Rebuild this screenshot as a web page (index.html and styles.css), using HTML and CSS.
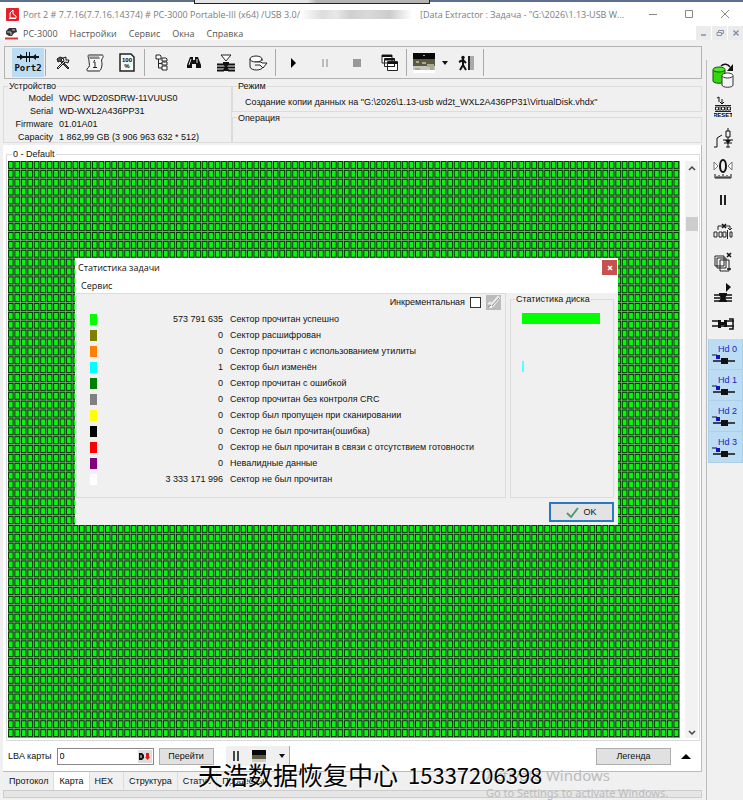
FILE: index.html
```html
<!DOCTYPE html>
<html lang="ru">
<head>
<meta charset="utf-8">
<title>PC-3000 Portable-III</title>
<link rel="stylesheet" href="styles.css">
</head>
<body>
<div class="topedge"><span class="edge-tab"></span></div>
<header class="titlebar">
  <svg class="logo" width="13" height="13" viewBox="0 0 13 13"><rect width="13" height="13" rx="1" fill="#e3202c"/><path d="M4 10V5l3-3v4l3 2v2z" fill="none" stroke="#fff"/><path d="M3 10.500h7" stroke="#fff"/></svg>
  <h1 class="title">Port 2 # 7.7.16(7.7.16.14374) # PC-3000 Portable-III (x64) /USB 3.0/</h1>
  <span class="redacted"></span>
  <span class="title title-rest">[Data Extractor : Задача - "G:\2026\1.13-USB W...</span>
  <div class="winbtns">
    <button aria-label="Свернуть"><svg width="10" height="10" viewBox="0 0 10 10"><path d="M1 5.500h8" stroke="#888"/></svg></button>
    <button aria-label="Развернуть"><svg width="10" height="10" viewBox="0 0 10 10"><path d="M1.500 1.500h7v7h-7z" fill="none" stroke="#888"/></svg></button>
    <button aria-label="Закрыть"><svg width="10" height="10" viewBox="0 0 10 10"><path d="M1 1l8 8M9 1l-8 8" stroke="#888"/></svg></button>
  </div>
</header>
<nav class="menubar">
  <svg width="13" height="13" viewBox="0 0 13 13"><path d="M1 4l3-3h7l1 4-3 1-2 3H4L1 7z" fill="#333"/><path d="M2 5h4v3M7 3h3" stroke="#ccc" fill="none"/><path d="M0 11.500h13" stroke="#d33" stroke-width="2"/></svg>
  <button>PC-3000</button><button>Настройки</button><button>Сервис</button><button>Окна</button><button>Справка</button>
  <div class="mdibtns">
    <button aria-label="Свернуть окно"><svg width="8" height="8" viewBox="0 0 8 8"><path d="M1 6h5" stroke="#8293a8" stroke-width="1.500"/></svg></button>
    <button aria-label="Восстановить окно"><svg width="8" height="8" viewBox="0 0 8 8"><path d="M2.500 3V1.500h5v3H6M1 3.500h4.500v3H1z" fill="none" stroke="#8293a8"/></svg></button>
    <button aria-label="Закрыть окно"><svg width="8" height="8" viewBox="0 0 8 8"><path d="M1.500 1.500l5 5M6.500 1.500l-5 5" stroke="#8293a8" stroke-width="1.500"/></svg></button>
  </div>
</nav>
<div class="frame">
<div class="left">
  <div class="toolbar">
    <button class="tb port"><svg width="26" height="12" viewBox="0 0 26 12"><path d="M2 6h22" stroke="#111" stroke-width="2"/><path d="M5 3l4 3-4 3zM21 3l-4 3 4 3z" fill="#111"/><path d="M11.500 1v10M14.500 1v10" stroke="#111"/></svg><span>Port2</span></button>
    <i class="sep"></i>
    <button class="tb" aria-label="Инструменты"><svg width="14" height="14" viewBox="0 0 14 14"><path d="M1 3l3-2 3 1-2 2 8 8-1 1-8-8-2 1z" fill="#555" stroke="#222"/><path d="M1 12l7-7-1-3 3-1v3l3 0-1 3-3-1-7 7z" fill="#ddd" stroke="#222"/></svg></button>
    <button class="tb" aria-label="Протокол"><svg width="18" height="20" viewBox="0 0 18 20"><path d="M3 2h13c2 0 1 3 0 4s0 3 0 5-1 7-3 7H2c-2 0-1-3 1-4 1-2 0-4 0-6S1 2 3 2z" fill="#f6f6f6" stroke="#222"/><path d="M4 5h10M4 3v3M6 3v3M8 3v3M10 3v3M12 3v3" stroke="#444" stroke-width=".7"/><path d="M7 9h2v5M7 14.500h4M8 7.500h1" stroke="#222" fill="none"/></svg></button>
    <button class="tb" aria-label="Сто процентов"><svg width="16" height="19" viewBox="0 0 16 19"><path d="M1 1h11l3 3v14H1z" fill="#f8f8f8" stroke="#222" stroke-width="1.500"/><text x="8" y="9" class="tiny" text-anchor="middle">100</text><text x="8" y="15" class="tiny" text-anchor="middle">%</text></svg></button>
    <i class="sep"></i>
    <button class="tb" aria-label="Дерево"><svg width="14" height="17" viewBox="0 0 14 17"><path d="M1 1h4l1 1v3H1zM7 4h4l1 1v2H7zM7 8h5v3H7zM7 12h5v4H7z" fill="#fff" stroke="#222"/><path d="M3.500 5v9H7M3.500 9.500H7" fill="none" stroke="#222"/></svg></button>
    <button class="tb" aria-label="Поиск"><svg width="14" height="14" viewBox="0 0 14 14"><path d="M3 1h3v3h2V1h3l3 8v3H9V8H5v4H0V9z" fill="#111"/><path d="M4 3L2 9M10 3v4" stroke="#ddd"/></svg></button>
    <button class="tb" aria-label="Фильтр"><svg width="20" height="18" viewBox="0 0 20 18"><path d="M5 1h10l-5 6z" fill="#fff" stroke="#222"/><path d="M1 10.500h7M1 13.500h18M1 16.500h7M12 10.500h7M12 16.500h7" stroke="#111" stroke-width="2"/><path d="M7 8h6v2l-2 3 2 3v1H7v-1l2-3-2-3z" fill="#111"/></svg></button>
    <button class="tb" aria-label="Чтение диска"><svg width="19" height="16" viewBox="0 0 19 16"><ellipse cx="7" cy="4" rx="6" ry="3" fill="#fff" stroke="#222"/><path d="M1 4v8c1 4 12 4 13 0" fill="none" stroke="#222"/><path d="M13 4v2M6 7h6l1 1h5l-4 5-3-3H6" fill="#fff" stroke="#222"/></svg></button>
    <i class="sep"></i>
    <button class="tb" aria-label="Старт"><svg width="8" height="10" viewBox="0 0 8 10"><path d="M2 0l5 5-5 5z" fill="#000"/></svg></button>
    <button class="tb" aria-label="Пауза"><svg width="8" height="10" viewBox="0 0 8 10"><path d="M2 1v8M6 1v8" stroke="#aaa" stroke-width="1.500"/></svg></button>
    <button class="tb" aria-label="Стоп"><svg width="8" height="8" viewBox="0 0 8 8"><path d="M0 0h8v8H0z" fill="#999"/></svg></button>
    <button class="tb" aria-label="Окна"><svg width="17" height="17" viewBox="0 0 17 17"><g fill="#fff" stroke="#222"><path d="M1 1h10v8H1zM3.500 4.500h10v8h-10zM6.500 7.500h10v9h-10z"/></g><path d="M1 2h10M4 5.500h10M7 9h10" stroke="#111" stroke-width="2"/><path d="M9 12.500h5" stroke="#222"/></svg></button>
    <i class="sep"></i>
    <button class="tb" aria-label="Карта"><svg width="22" height="20" viewBox="0 0 22 20"><path d="M0 0h22v6H0z" fill="#080808"/><path d="M0 6h22v7H0z" fill="#5b5a3e"/><path d="M0 13h22v4H0z" fill="#c4c4c4"/><path d="M0 17h22v3H0z" fill="#fff"/><path d="M3 8h3v2H3zM9 9h4v2H9zM10 2h2v1h-2zM14 11h7v6h-4v-3h-3zM2 15h5v2H2z" fill="#a9a98f"/></svg></button>
    <button class="caret" aria-label="Выбор карты"><svg width="6" height="4" viewBox="0 0 6 4"><path d="M0 0h6L3 4z" fill="#111"/></svg></button>
    <button class="tb" aria-label="Выход"><svg width="16" height="16" viewBox="0 0 16 16"><circle cx="5" cy="2.500" r="1.700" fill="#111"/><path d="M5 4v6l3 5M5 10l-3 5M1 7l4-2 3 3" stroke="#111" stroke-width="2" fill="none"/><path d="M10 1h2v14h-2z" fill="#222"/><path d="M12 1h4v14h-4z" fill="#aaa"/></svg></button>
    <i class="sep"></i>
  </div>
  <section class="info">
    <fieldset class="device">
      <legend>Устройство</legend>
      <dl><dt>Model</dt><dd>WDC WD20SDRW-11VUUS0</dd><dt>Serial</dt><dd>WD-WXL2A436PP31</dd><dt>Firmware</dt><dd>01.01A01</dd><dt>Capacity</dt><dd>1 862,99 GB (3 906 963 632 * 512)</dd></dl>
    </fieldset>
    <div class="modes">
      <fieldset><legend>Режим</legend><p>Создание копии данных на "G:\2026\1.13-usb wd2t_WXL2A436PP31\VirtualDisk.vhdx"</p></fieldset>
      <fieldset><legend>Операция</legend></fieldset>
    </div>
  </section>
  <main class="work">
    <fieldset class="mapbox">
      <legend>0 - Default</legend>
      <div class="maprow">
        <svg class="map" viewBox="0 0 728 585" preserveAspectRatio="none" role="img" aria-label="Карта секторов">
          <defs><pattern id="cell" width="7" height="9" patternUnits="userSpaceOnUse"><path d="M0 0h7v9H0z" fill="#869686"/><path d="M0 0h6v8H0z" fill="#003800"/><path d="M1 1h4v6H1z" fill="#00fa0a"/></pattern></defs>
          <rect width="728" height="585" fill="url(#cell)"/>
        </svg>
        <div class="scroll">
          <svg width="8" height="6" viewBox="0 0 8 6"><path d="M1 5l3-3 3 3" fill="none" stroke="#444" stroke-width="1.500"/></svg>
          <i class="thumb"></i>
          <svg width="8" height="6" viewBox="0 0 8 6"><path d="M1 1l3 3 3-3" fill="none" stroke="#444" stroke-width="1.500"/></svg>
        </div>
      </div>
    </fieldset>
    <div class="controls">
      <label for="lba">LBA карты</label>
      <div class="lbabox"><input id="lba" type="text" value="0"><button aria-label="Система счисления"><svg width="11" height="9" viewBox="0 0 11 9"><path d="M0 1h3l2 2v3L3 8H0z" fill="#111"/><path d="M2 3v3" stroke="#eee"/><path d="M7 1h3v4h1L8.500 8 6 5h1z" fill="#e01818"/></svg></button></div>
      <button class="btn go">Перейти</button>
      <div class="minibar">
        <button aria-label="Приостановить карту"><svg width="8" height="12" viewBox="0 0 8 12"><path d="M2 1v10M6 1v10" stroke="#111" stroke-width="1.500"/></svg></button>
        <button aria-label="Вид карты"><svg width="14" height="12" viewBox="0 0 14 12"><path d="M0 0h14v5H0z" fill="#080808"/><path d="M0 5h14v4H0z" fill="#5b5a3e"/><path d="M0 9h14v3H0z" fill="#ccc"/></svg></button>
        <button aria-label="Список видов"><svg width="6" height="4" viewBox="0 0 6 4"><path d="M0 0h6L3 4z" fill="#111"/></svg></button>
      </div>
      <button class="btn map-key">Легенда</button>
      <button class="up" aria-label="Развернуть панель"><svg width="10" height="6" viewBox="0 0 10 6"><path d="M0 6l5-5 5 5z" fill="#000"/></svg></button>
    </div>

    <section class="dialog" role="dialog" aria-labelledby="dlg-title">
      <header class="dlg-head"><h2 id="dlg-title">Статистика задачи</h2><button class="close" aria-label="Закрыть"><svg width="6" height="6" viewBox="0 0 6 6"><path d="M1 1l4 4M5 1L1 5" stroke="#fff" stroke-width="1.500"/></svg></button></header>
      <div class="dlg-menu"><button>Сервис</button></div>
      <div class="dlg-body">
        <div class="stats">
          <div class="incr"><label for="incr">Инкрементальная</label><input id="incr" type="checkbox"><button class="brush" aria-label="Очистить"><svg width="15" height="15" viewBox="0 0 15 15"><path d="M5 10l7-8 1 1-6 8zM2 9l3-2M3 12h3" stroke="#eee" stroke-width="2"/><path d="M6 11l7-8M2 12l3-2" stroke="#888"/></svg></button></div>
          <table>
            <tr><td><i class="sw lime"></i></td><td>573 791 635</td><td>Сектор прочитан успешно</td></tr>
            <tr><td><i class="sw olive"></i></td><td>0</td><td>Сектор расшифрован</td></tr>
            <tr><td><i class="sw orange"></i></td><td>0</td><td>Сектор прочитан с использованием утилиты</td></tr>
            <tr><td><i class="sw cyan"></i></td><td>1</td><td>Сектор был изменён</td></tr>
            <tr><td><i class="sw green"></i></td><td>0</td><td>Сектор прочитан с ошибкой</td></tr>
            <tr><td><i class="sw gray"></i></td><td>0</td><td>Сектор прочитан без контроля CRC</td></tr>
            <tr><td><i class="sw yellow"></i></td><td>0</td><td>Сектор был пропущен при сканировании</td></tr>
            <tr><td><i class="sw black"></i></td><td>0</td><td>Сектор не был прочитан(ошибка)</td></tr>
            <tr><td><i class="sw red"></i></td><td>0</td><td>Сектор не был прочитан в связи с отсутствием готовности</td></tr>
            <tr><td><i class="sw purple"></i></td><td>0</td><td>Невалидные данные</td></tr>
            <tr><td><i class="sw white"></i></td><td>3 333 171 996</td><td>Сектор не был прочитан</td></tr>
          </table>
        </div>
        <fieldset class="disk"><legend>Статистика диска</legend><div class="bars"><i class="bar full"></i><i class="bar tick"></i></div></fieldset>
      </div>
      <footer class="dlg-foot"><button class="ok"><svg width="13" height="11" viewBox="0 0 13 11"><path d="M1 6l4 4 7-9" fill="none" stroke="#4f9c78" stroke-width="2"/></svg>OK</button></footer>
    </section>
  </main>
  <nav class="tabs"><button>Протокол</button><button class="active">Карта</button><button class="hex">HEX</button><button>Структура</button><button>Статус</button><button>Процессы</button></nav>
  <div class="status"></div>
</div>
<aside class="side">
  <button aria-label="Копия диска"><svg width="22" height="25" viewBox="0 0 22 25"><path d="M1 7v11c0 3 12 3 12 0V7" fill="#35d80c" stroke="#164f0a"/><ellipse cx="7" cy="6.500" rx="6" ry="2.500" fill="#4aed20" stroke="#164f0a"/><path d="M10 13v9c0 3 11 3 11 0v-9" fill="#f4f4f4" stroke="#333"/><ellipse cx="15.500" cy="12.500" rx="5.500" ry="2.500" fill="#fff" stroke="#333"/><path d="M9 3c3-3 7-2 9 1" fill="none" stroke="#111" stroke-width="1.500"/><path d="M21 1v7h-6z" fill="#111"/></svg></button>
  <button aria-label="Сброс"><svg width="18" height="22" viewBox="0 0 18 22"><path d="M3 2l2-1v5M8 3v5M6 6l2 2 2-2" fill="none" stroke="#111"/><path d="M1 9.500h16M1 15.500h16" stroke="#222"/><path d="M1.500 11h3v3h-3zM7.500 11h3v3h-3zM13.500 11h3v3h-3z" fill="none" stroke="#222"/><path d="M6 9v7M12 9v7" stroke="#222"/><text x="9" y="21" text-anchor="middle" class="reset">RESET</text></svg></button>
  <button aria-label="Реле"><svg width="20" height="20" viewBox="0 0 20 20"><path d="M1 19h3v-9l5-3M15 0v3M13 3h4v6h-4zM15 9v10M10 12h10M11 15h8M13 19h4" fill="none" stroke="#111"/><path d="M12 12h6l-3 4z" fill="#111"/></svg></button>
  <button aria-label="Калибровка"><svg width="20" height="22" viewBox="0 0 20 22"><path d="M1 4l4 4-4 4zM19 4l-4 4 4 4z" fill="#fff" stroke="#777"/><ellipse cx="10" cy="8" rx="3" ry="6" fill="none" stroke="#111" stroke-width="2"/><path d="M2 20h16M2 16v4M6 17v3M10 16v4M14 17v3M18 16v4M4 18v2M8 18v2M12 18v2M16 18v2" stroke="#111"/></svg></button>
  <button aria-label="Пауза"><svg width="8" height="10" viewBox="0 0 8 10"><path d="M2 0v10M6 0v10" stroke="#222" stroke-width="2"/></svg></button>
  <button aria-label="Удалить сектор"><svg width="20" height="16" viewBox="0 0 20 16"><path d="M5 7V3h12v4M1 9h3v5H1zM6 9h3v5H6zM10 9h3v5h-3zM14.500 7v9M17 9h2v5h-2zM15 5l2 2 2-2" fill="none" stroke="#222"/><path d="M9 1l4 4M13 1L9 5" stroke="#111" stroke-width="1.500"/></svg></button>
  <button aria-label="Очистить копии"><svg width="20" height="20" viewBox="0 0 20 20"><g fill="#f4f4f4" stroke="#222"><path d="M2 4h9v10H2zM4 6h9v10H4zM7 8h9v11H7z"/></g><path d="M14 1l4 4M18 1l-4 4M14 17h4" stroke="#111" stroke-width="1.500"/></svg></button>
  <button aria-label="Запуск"><svg width="20" height="20" viewBox="0 0 20 20"><path d="M13 0l5 4-5 5z" fill="#111"/><path d="M1 12h18M1 15h18M1 18h18" stroke="#111" stroke-width="1.500"/><path d="M6 10h8v2l-2 3 2 3v1H6v-1l2-3-2-3z" fill="#111"/></svg></button>
  <button aria-label="Соединение"><svg width="22" height="12" viewBox="0 0 22 12"><path d="M0 3h7M0 8h10M12 3h10M10 8h12M17 1h4v10h-4" fill="none" stroke="#111" stroke-width="1.500"/><path d="M6 2h3v2h3V2h3v7h-3V7H9v3H6z" fill="#111"/></svg></button>
  <button class="hd"><span>Hd 0</span><svg width="24" height="11" viewBox="0 0 24 11"><path d="M1 1h5" stroke="#111"/><path d="M5 1h4v4H5z" fill="#11c"/><path d="M2 7h22" stroke="#111" stroke-width="1.500"/><path d="M10 4h7v6h-7z" fill="#111"/></svg></button>
  <button class="hd"><span>Hd 1</span><svg width="24" height="11" viewBox="0 0 24 11"><path d="M1 1h5" stroke="#111"/><path d="M5 1h4v4H5z" fill="#11c"/><path d="M2 7h22" stroke="#111" stroke-width="1.500"/><path d="M10 4h7v6h-7z" fill="#111"/></svg></button>
  <button class="hd"><span>Hd 2</span><svg width="24" height="11" viewBox="0 0 24 11"><path d="M1 1h5" stroke="#111"/><path d="M5 1h4v4H5z" fill="#11c"/><path d="M2 7h22" stroke="#111" stroke-width="1.500"/><path d="M10 4h7v6h-7z" fill="#111"/></svg></button>
  <button class="hd"><span>Hd 3</span><svg width="24" height="11" viewBox="0 0 24 11"><path d="M1 1h5" stroke="#111"/><path d="M5 1h4v4H5z" fill="#11c"/><path d="M2 7h22" stroke="#111" stroke-width="1.500"/><path d="M10 4h7v6h-7z" fill="#111"/></svg></button>
</aside>
</div>
<div class="activate"><b>Activate Windows</b><span>Go to Settings to activate Windows.</span></div>
<div class="mark"><span>天浩数据恢复中心</span><span class="phone">15337206398</span></div>
</body>
</html>
```
FILE: styles.css
```css
* { box-sizing: border-box; }
body { margin: 0; min-height: 100vh; display: flex; flex-direction: column; position: relative; background: #f0f0f0; color: #111; font: 9px/13px "Liberation Sans", sans-serif; }
button { border: 0; padding: 0; margin: 0; background: none; font: inherit; color: inherit; display: flex; align-items: center; justify-content: center; }
svg { display: block; flex: none; }
h1, h2, p, dl, dd { margin: 0; font-size: inherit; font-weight: normal; }
fieldset { border: 1px solid #dcdcdc; margin: 0; padding: 0; min-width: 0; }
legend { padding: 0 1px; margin-left: 4px; line-height: 12px; white-space: nowrap; }

.topedge { height: 2px; background: #5d6f8f; flex: none; }
.edge-tab { position: absolute; top: 0; left: 194px; width: 236px; height: 4px; background: linear-gradient(90deg, #e4e4e4 48%, #b4b4b4 52%); border: 1px solid #222; border-top: 0; z-index: 1; }
.titlebar { height: 24px; background: #fff; display: flex; align-items: center; padding-left: 6px; color: #7c7c7c; font-family: "Open Sans", sans-serif; white-space: nowrap; flex: none; }
.logo { margin-right: 4px; }
.redacted { width: 112px; height: 9px; margin-right: 8px; background: linear-gradient(90deg, #fff, #ddd 20%, #e8e8e8 32%, #cfcfcf 45%, #d9d9d9 60%, #ccc 80%, #fff); }
.winbtns { margin-left: auto; display: flex; }
.winbtns button { width: 36px; height: 22px; }
.menubar { height: 14px; background: #fff; display: flex; align-items: center; padding-left: 5px; gap: 12px; color: #555; font-family: "Open Sans", sans-serif; flex: none; }
.menubar > svg { margin-right: -7px; }
.mdibtns { margin-left: auto; display: flex; gap: 1px; align-self: stretch; }
.mdibtns button { width: 15px; background: #ececec; }

.frame { flex: 1; display: flex; }
.left { flex: 1; min-width: 0; display: flex; flex-direction: column; padding: 6px 4px 3px 3px; }
.toolbar { height: 33px; border: 1px solid #b4b4b4; display: flex; align-items: center; padding-left: 7px; margin-left: 1px; }
.tb { width: 32px; height: 29px; }
.port { background: #bcdcf4; flex-direction: column; font: bold 9px/11px "DejaVu Sans Mono", monospace; color: #111; }
.caret { width: 10px; }
.sep { width: 1px; height: 27px; background: #aaa; margin: 0 1px; }
.tiny { font: bold 6px "Liberation Sans", sans-serif; }
.reset { font: bold 6px "Liberation Sans", sans-serif; }

.info { display: flex; height: 66px; padding: 1px 0 2px; }
.device { flex: 0 0 229px; }
.modes { flex: 1; display: flex; flex-direction: column; }
.modes fieldset { height: 32px; }
.modes p { padding: 4px 0 0 12px; white-space: nowrap; }
dl { display: grid; grid-template-columns: 49px 1fr; column-gap: 6px; white-space: nowrap; }
dt { text-align: right; }

.work { position: relative; flex: 1; display: flex; flex-direction: column; background: #fff; border-right: 1px solid #bbb; border-bottom: 1px solid #bbb; padding: 3px 1px 0 3px; }
.mapbox { flex: 1; display: flex; flex-direction: column; padding: 1px 1px 2px; }
.maprow { flex: 1; display: flex; }
.map { flex: 1; width: 0; height: 100%; min-height: 577px; }
.scroll { width: 13px; margin-left: 5px; background: #f2f2f2; display: flex; flex-direction: column; align-items: center; padding: 4px 0 2px; }
.thumb { width: 12px; height: 14px; margin-top: 46px; margin-bottom: auto; background: #cdcdcd; }
.controls { height: 30px; display: flex; align-items: center; padding-left: 2px; }
.lbabox { display: flex; width: 97px; height: 17px; margin-left: 5px; border: 1px solid #888; padding: 1px; }
.lbabox input { flex: 1; min-width: 0; border: 0; padding: 0 1px; font: inherit; background: #fff; }
.lbabox button { width: 14px; background: #ddd; }
.btn { height: 17px; background: #e1e1e1; border: 1px solid #adadad; }
.go { width: 55px; margin-left: 5px; }
.minibar { margin-left: 12px; height: 20px; width: 64px; background: #f0f0f0; border-right: 1px solid #aaa; display: flex; align-items: center; justify-content: space-between; padding: 0 4px 0 6px; }
.map-key { width: 75px; margin-left: auto; }
.up { width: 29px; }
.tabs { display: flex; height: 18px; padding-left: 1px; }
.tabs button { padding: 0 5px; border-right: 1px solid #ddd; }
.tabs .hex { padding-right: 10px; }
.tabs .active { background: #fff; }
.status { height: 8px; background: #e6e6e6; border: 1px solid #ccc; }

.side { width: 37px; margin-top: 20px; border-left: 1px solid #bbb; display: flex; flex-direction: column; }
.side button { height: 31px; padding-right: 4px; flex: none; }
.side .hd { flex-direction: column; background: #bcdcf4; border: 1px solid #add0e8; border-width: 0 1px 1px; margin-left: 1px; padding-right: 5px; color: #2222c8; line-height: 10px; }
.hd span { align-self: flex-end; }

.dialog { position: absolute; top: 113px; left: 72px; right: 83px; height: 267px; background: #f0f0f0; display: flex; flex-direction: column; }
.dlg-head { height: 19px; background: #fff; display: flex; justify-content: space-between; padding: 2px 1px 0 3px; font: 9px/15px "Open Sans", sans-serif; }
.close { width: 15px; height: 15px; background: #c75050; }
.dlg-menu { height: 16px; background: #fff; display: flex; padding-left: 6px; font-family: "Open Sans", sans-serif; }
.dlg-body { flex: 1; display: flex; gap: 4px; padding: 0 4px 0 1px; }
.stats { flex: 1; border: 1px solid #dcdcdc; }
.incr { display: flex; align-items: center; justify-content: flex-end; gap: 5px; padding-right: 4px; height: 17px; }
.incr input { appearance: none; width: 11px; height: 11px; margin: 0; border: 1px solid #333; background: #fff; }
.brush { width: 15px; height: 15px; background: #bbb; }
table { border-collapse: collapse; }
td { padding: 0; height: 16px; white-space: nowrap; }
td:first-child { width: 45px; padding-left: 13px; }
td:nth-child(2) { width: 101px; text-align: right; }
td:nth-child(3) { padding-left: 7px; }
.sw { display: block; width: 7px; height: 11px; }
.lime { background: #0f0; } .olive { background: #808000; } .orange { background: #ff8000; } .cyan { background: #0ff; }
.green { background: #008000; } .gray { background: #808080; } .yellow { background: #ff0; } .black { background: #000; }
.red { background: #f00; } .purple { background: #800080; } .white { background: #fff; }
.disk { width: 104px; }
.bars { padding: 8px 13px 8px 11px; }
.bar { display: block; height: 11px; }
.full { background: #0f0; }
.tick { width: 2px; margin-top: 37px; background: #5ff; }
.dlg-foot { height: 27px; display: flex; justify-content: flex-end; padding: 4px 4px 3px; }
.ok { width: 65px; gap: 4px; border: 2px solid #2a78bf; background: #e3e3e3; }

.activate { position: absolute; left: 486px; bottom: 1px; color: #bcbcbc; font: 11px/15px "Noto Sans", sans-serif; display: flex; flex-direction: column; }
.activate b { font-weight: normal; font-size: 15px; line-height: 20px; }
.mark { position: absolute; left: 198px; bottom: 11px; display: flex; align-items: center; gap: 10px; color: #000; font: 25px/32px "Noto Sans CJK SC", sans-serif; white-space: nowrap; text-shadow: 1px 1px 0 #fff; }
.phone { font-size: 22px; }
```
